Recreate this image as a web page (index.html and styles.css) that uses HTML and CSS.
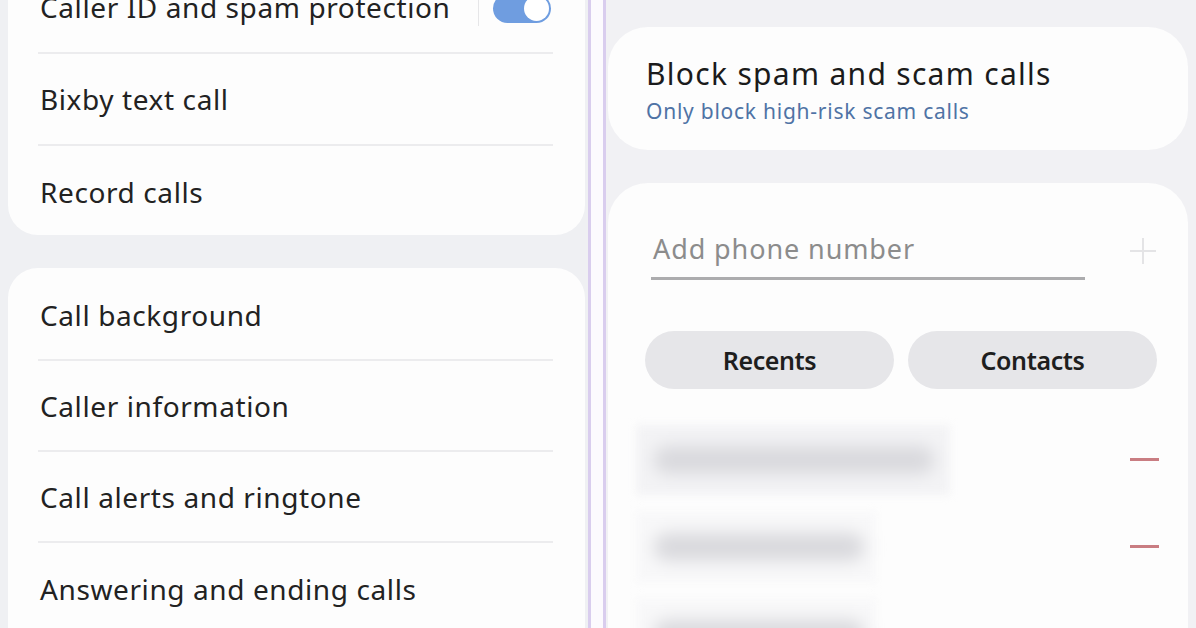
FILE: index.html
```html
<!DOCTYPE html>
<html>
<head>
<meta charset="utf-8">
<link rel="stylesheet" href="styles.css">
</head>
<body>
<div class="screen">
  <section class="panel left">
    <div class="card card-top">
      <div class="row row-toggle">
        <span class="label">Caller ID and spam protection</span>
        <span class="vsep"></span>
        <span class="toggle"><span class="thumb"></span></span>
      </div>
      <div class="row"><span class="label">Bixby text call</span></div>
      <div class="row last"><span class="label">Record calls</span></div>
    </div>
    <div class="card card-bottom">
      <div class="row"><span class="label">Call background</span></div>
      <div class="row"><span class="label">Caller information</span></div>
      <div class="row"><span class="label">Call alerts and ringtone</span></div>
      <div class="row last"><span class="label">Answering and ending calls</span></div>
    </div>
  </section>
  <div class="divider"><span class="line"></span><span class="gapline"></span><span class="line"></span></div>
  <section class="panel right">
    <div class="rcard block">
      <div class="title">Block spam and scam calls</div>
      <div class="sub">Only block high-risk scam calls</div>
    </div>
    <div class="rcard list">
      <div class="input-row">
        <div class="input">Add phone number</div>
        <div class="plus">
          <svg width="30" height="30" viewBox="0 0 30 30"><path d="M15 2v26M2 15h26" stroke="#e4e4e6" stroke-width="2"/></svg>
        </div>
      </div>
      <div class="buttons">
        <div class="btn">Recents</div>
        <div class="btn">Contacts</div>
      </div>
      <div class="blocked">
        <div class="brow">
          <div class="blur-wrap w1"><span class="blurline"></span></div>
          <span class="minus"></span>
        </div>
        <div class="brow">
          <div class="blur-wrap w2"><span class="blurline"></span></div>
          <span class="minus"></span>
        </div>
        <div class="brow">
          <div class="blur-wrap w3"><span class="blurline"></span></div>
        </div>
      </div>
    </div>
  </section>
</div>
</body>
</html>
```

FILE: styles.css
```css
* { box-sizing: border-box; }
html, body { margin: 0; padding: 0; }
body {
  width: 1196px;
  height: 628px;
  overflow: hidden;
  background: #f0f0f3;
  font-family: "Noto Sans", "Open Sans", sans-serif;
  color: #1f1f1f;
}
.screen {
  display: flex;
  height: 628px;
  overflow: hidden;
}
.panel.left {
  width: 588px;
  flex-shrink: 0;
  background: #eff0f3;
  display: flex;
  flex-direction: column;
  gap: 33px;
}
.card {
  background: #fdfdfd;
  margin-left: 8px;
  width: 577px;
  padding: 0 32px 0 30px;
}
.card-top {
  border-radius: 0 0 30px 30px;
  height: 235px;
  flex-shrink: 0;
}
.card-bottom {
  border-radius: 30px 30px 0 0;
  flex: 1;
  padding-top: 2px;
}
.row {
  height: 91px;
  display: flex;
  align-items: center;
  border-bottom: 2px solid #ececee;
  padding-left: 2px;
}
.row.last { border-bottom: none; }
.row-toggle {
  height: 54px;
  align-items: flex-start;
  position: relative;
}
.row-toggle .label { margin-top: -12px; }
.card-top .row:nth-child(2) { height: 92px; }
.label {
  font-size: 28px;
  letter-spacing: 0.6px;
  color: #222;
  white-space: nowrap;
}
.vsep {
  position: absolute;
  left: 440px;
  top: 0;
  width: 1px;
  height: 26px;
  background: #e6e6e8;
}
.toggle {
  position: absolute;
  left: 455px;
  top: -6px;
  width: 58px;
  height: 29px;
  border-radius: 15px;
  background: #6f9de0;
}
.thumb {
  position: absolute;
  right: 2px;
  top: 2px;
  width: 25px;
  height: 25px;
  border-radius: 50%;
  background: #ffffff;
}
.divider {
  width: 18px;
  flex-shrink: 0;
  display: flex;
  background: #fbf9fd;
}
.divider .line {
  width: 3px;
  background: #d9cdee;
}
.divider .gapline {
  width: 12px;
  background: #fcfafe;
}
.panel.right {
  flex: 1;
  min-width: 0;
  background: #f1f1f4;
  padding: 27px 8px 0 2px;
  display: flex;
  flex-direction: column;
  gap: 33px;
}
.rcard {
  background: #fdfdfd;
  border-radius: 40px;
}
.block {
  height: 123px;
  flex-shrink: 0;
  padding: 27px 38px 0 38px;
}
.title {
  font-size: 30px;
  letter-spacing: 1.3px;
  color: #1b1b1b;
  line-height: 40px;
  white-space: nowrap;
}
.sub {
  font-size: 21px;
  letter-spacing: 0.75px;
  color: #4f73a5;
  margin-top: 4px;
  line-height: 26px;
  white-space: nowrap;
}
.list {
  flex: 1;
  min-height: 0;
  border-radius: 40px 40px 0 0;
  padding: 46px 29px 0 37px;
}
.input-row {
  display: flex;
  align-items: flex-start;
}
.input {
  width: 434px;
  flex-shrink: 0;
  margin-left: 6px;
  height: 51px;
  border-bottom: 3px solid #acacae;
  font-size: 27px;
  letter-spacing: 0.9px;
  color: #8c8c8c;
  padding-left: 2px;
  line-height: 40px;
  white-space: nowrap;
}
.plus {
  margin-left: 43px;
  margin-top: 7px;
}
.buttons {
  display: flex;
  gap: 14px;
  margin-top: 51px;
}
.btn {
  width: 249px;
  height: 58px;
  border-radius: 29px;
  background: #e6e6e9;
  display: flex;
  align-items: center;
  justify-content: center;
  font-size: 25px;
  font-weight: 600;
  color: #1e1e1e;
  letter-spacing: -0.4px;
}
.blocked {
  margin-top: 27px;
  margin-left: -9px;
  display: flex;
  flex-direction: column;
}
.brow {
  height: 87px;
  display: flex;
  align-items: center;
  justify-content: space-between;
}
.blur-wrap {
  height: 70px;
  background: #f3f3f5;
  display: flex;
  align-items: center;
  padding-left: 18px;
  filter: blur(4px);
}
.w1 { width: 314px; }
.w2 { width: 240px; background: #f8f8f9; }
.w3 { width: 240px; background: #f8f8f9; }
.blurline {
  display: block;
  height: 28px;
  border-radius: 14px;
  background: #d9d9dd;
  filter: blur(7px);
}
.w1 .blurline { width: 280px; }
.w2 .blurline { width: 210px; }
.w3 .blurline { width: 210px; }
.minus {
  width: 29px;
  height: 3px;
  background: #c97d82;
}
```
